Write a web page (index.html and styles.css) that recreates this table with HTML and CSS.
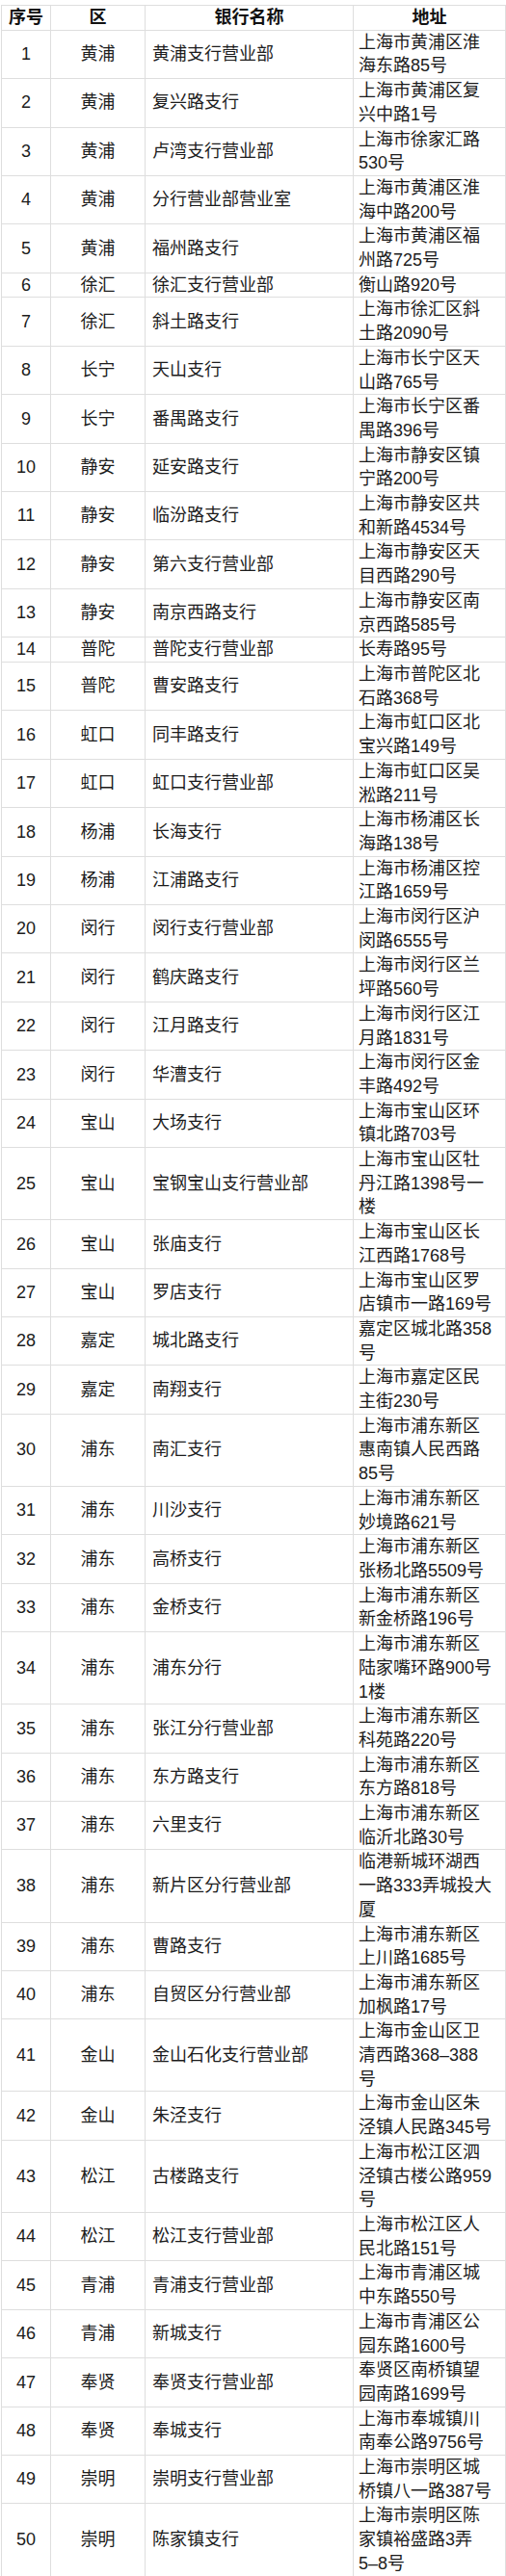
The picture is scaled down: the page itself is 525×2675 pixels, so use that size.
FILE: index.html
```html
<!DOCTYPE html>
<html lang="zh-CN">
<head>
<meta charset="utf-8">
<title>网点列表</title>
<link rel="stylesheet" href="styles.css">
</head>
<body>
<div class="sheet">
<table class="branches">
<colgroup>
<col class="c-num"><col class="c-dist"><col class="c-name"><col class="c-addr">
</colgroup>
<thead>
<tr><th>序号</th><th>区</th><th>银行名称</th><th>地址</th></tr>
</thead>
<tbody>
<tr><td class="num">1</td><td class="dist">黄浦</td><td class="name">黄浦支行营业部</td><td class="addr">上海市黄浦区淮海东路85号</td></tr>
<tr><td class="num">2</td><td class="dist">黄浦</td><td class="name">复兴路支行</td><td class="addr">上海市黄浦区复兴中路1号</td></tr>
<tr><td class="num">3</td><td class="dist">黄浦</td><td class="name">卢湾支行营业部</td><td class="addr">上海市徐家汇路530号</td></tr>
<tr><td class="num">4</td><td class="dist">黄浦</td><td class="name">分行营业部营业室</td><td class="addr">上海市黄浦区淮海中路200号</td></tr>
<tr><td class="num">5</td><td class="dist">黄浦</td><td class="name">福州路支行</td><td class="addr">上海市黄浦区福州路725号</td></tr>
<tr><td class="num">6</td><td class="dist">徐汇</td><td class="name">徐汇支行营业部</td><td class="addr">衡山路920号</td></tr>
<tr><td class="num">7</td><td class="dist">徐汇</td><td class="name">斜土路支行</td><td class="addr">上海市徐汇区斜土路2090号</td></tr>
<tr><td class="num">8</td><td class="dist">长宁</td><td class="name">天山支行</td><td class="addr">上海市长宁区天山路765号</td></tr>
<tr><td class="num">9</td><td class="dist">长宁</td><td class="name">番禺路支行</td><td class="addr">上海市长宁区番禺路396号</td></tr>
<tr><td class="num">10</td><td class="dist">静安</td><td class="name">延安路支行</td><td class="addr">上海市静安区镇宁路200号</td></tr>
<tr><td class="num">11</td><td class="dist">静安</td><td class="name">临汾路支行</td><td class="addr">上海市静安区共和新路4534号</td></tr>
<tr><td class="num">12</td><td class="dist">静安</td><td class="name">第六支行营业部</td><td class="addr">上海市静安区天目西路290号</td></tr>
<tr><td class="num">13</td><td class="dist">静安</td><td class="name">南京西路支行</td><td class="addr">上海市静安区南京西路585号</td></tr>
<tr><td class="num">14</td><td class="dist">普陀</td><td class="name">普陀支行营业部</td><td class="addr">长寿路95号</td></tr>
<tr><td class="num">15</td><td class="dist">普陀</td><td class="name">曹安路支行</td><td class="addr">上海市普陀区北石路368号</td></tr>
<tr><td class="num">16</td><td class="dist">虹口</td><td class="name">同丰路支行</td><td class="addr">上海市虹口区北宝兴路149号</td></tr>
<tr><td class="num">17</td><td class="dist">虹口</td><td class="name">虹口支行营业部</td><td class="addr">上海市虹口区吴淞路211号</td></tr>
<tr><td class="num">18</td><td class="dist">杨浦</td><td class="name">长海支行</td><td class="addr">上海市杨浦区长海路138号</td></tr>
<tr><td class="num">19</td><td class="dist">杨浦</td><td class="name">江浦路支行</td><td class="addr">上海市杨浦区控江路1659号</td></tr>
<tr><td class="num">20</td><td class="dist">闵行</td><td class="name">闵行支行营业部</td><td class="addr">上海市闵行区沪闵路6555号</td></tr>
<tr><td class="num">21</td><td class="dist">闵行</td><td class="name">鹤庆路支行</td><td class="addr">上海市闵行区兰坪路560号</td></tr>
<tr><td class="num">22</td><td class="dist">闵行</td><td class="name">江月路支行</td><td class="addr">上海市闵行区江月路1831号</td></tr>
<tr><td class="num">23</td><td class="dist">闵行</td><td class="name">华漕支行</td><td class="addr">上海市闵行区金丰路492号</td></tr>
<tr><td class="num">24</td><td class="dist">宝山</td><td class="name">大场支行</td><td class="addr">上海市宝山区环镇北路703号</td></tr>
<tr><td class="num">25</td><td class="dist">宝山</td><td class="name">宝钢宝山支行营业部</td><td class="addr">上海市宝山区牡丹江路1398号一楼</td></tr>
<tr><td class="num">26</td><td class="dist">宝山</td><td class="name">张庙支行</td><td class="addr">上海市宝山区长江西路1768号</td></tr>
<tr><td class="num">27</td><td class="dist">宝山</td><td class="name">罗店支行</td><td class="addr">上海市宝山区罗店镇市一路169号</td></tr>
<tr><td class="num">28</td><td class="dist">嘉定</td><td class="name">城北路支行</td><td class="addr">嘉定区城北路358号</td></tr>
<tr><td class="num">29</td><td class="dist">嘉定</td><td class="name">南翔支行</td><td class="addr">上海市嘉定区民主街230号</td></tr>
<tr><td class="num">30</td><td class="dist">浦东</td><td class="name">南汇支行</td><td class="addr">上海市浦东新区惠南镇人民西路85号</td></tr>
<tr><td class="num">31</td><td class="dist">浦东</td><td class="name">川沙支行</td><td class="addr">上海市浦东新区妙境路621号</td></tr>
<tr><td class="num">32</td><td class="dist">浦东</td><td class="name">高桥支行</td><td class="addr">上海市浦东新区张杨北路5509号</td></tr>
<tr><td class="num">33</td><td class="dist">浦东</td><td class="name">金桥支行</td><td class="addr">上海市浦东新区新金桥路196号</td></tr>
<tr><td class="num">34</td><td class="dist">浦东</td><td class="name">浦东分行</td><td class="addr">上海市浦东新区陆家嘴环路900号1楼</td></tr>
<tr><td class="num">35</td><td class="dist">浦东</td><td class="name">张江分行营业部</td><td class="addr">上海市浦东新区科苑路220号</td></tr>
<tr><td class="num">36</td><td class="dist">浦东</td><td class="name">东方路支行</td><td class="addr">上海市浦东新区东方路818号</td></tr>
<tr><td class="num">37</td><td class="dist">浦东</td><td class="name">六里支行</td><td class="addr">上海市浦东新区临沂北路30号</td></tr>
<tr><td class="num">38</td><td class="dist">浦东</td><td class="name">新片区分行营业部</td><td class="addr">临港新城环湖西一路333弄城投大厦</td></tr>
<tr><td class="num">39</td><td class="dist">浦东</td><td class="name">曹路支行</td><td class="addr">上海市浦东新区上川路1685号</td></tr>
<tr><td class="num">40</td><td class="dist">浦东</td><td class="name">自贸区分行营业部</td><td class="addr">上海市浦东新区加枫路17号</td></tr>
<tr><td class="num">41</td><td class="dist">金山</td><td class="name">金山石化支行营业部</td><td class="addr">上海市金山区卫清西路<span class="range">368–388</span>号</td></tr>
<tr><td class="num">42</td><td class="dist">金山</td><td class="name">朱泾支行</td><td class="addr">上海市金山区朱泾镇人民路345号</td></tr>
<tr><td class="num">43</td><td class="dist">松江</td><td class="name">古楼路支行</td><td class="addr">上海市松江区泗泾镇古楼公路959号</td></tr>
<tr><td class="num">44</td><td class="dist">松江</td><td class="name">松江支行营业部</td><td class="addr">上海市松江区人民北路151号</td></tr>
<tr><td class="num">45</td><td class="dist">青浦</td><td class="name">青浦支行营业部</td><td class="addr">上海市青浦区城中东路550号</td></tr>
<tr><td class="num">46</td><td class="dist">青浦</td><td class="name">新城支行</td><td class="addr">上海市青浦区公园东路1600号</td></tr>
<tr><td class="num">47</td><td class="dist">奉贤</td><td class="name">奉贤支行营业部</td><td class="addr">奉贤区南桥镇望园南路1699号</td></tr>
<tr><td class="num">48</td><td class="dist">奉贤</td><td class="name">奉城支行</td><td class="addr">上海市奉城镇川南奉公路9756号</td></tr>
<tr><td class="num">49</td><td class="dist">崇明</td><td class="name">崇明支行营业部</td><td class="addr">上海市崇明区城桥镇八一路387号</td></tr>
<tr><td class="num">50</td><td class="dist">崇明</td><td class="name">陈家镇支行</td><td class="addr">上海市崇明区陈家镇裕盛路3弄<span class="range">5–8</span>号</td></tr>
</tbody>
</table>
</div>
</body>
</html>
```

FILE: styles.css
```css
html, body {
  margin: 0;
  padding: 0;
  background: #ffffff;
}

body {
  font-family: "Liberation Sans", "Noto Sans CJK SC", sans-serif;
  font-size: 18px;
  color: #1c1c1c;
}

.sheet {
  padding: 5px 0 0 1px;
}

.branches {
  border-collapse: collapse;
  table-layout: fixed;
  width: 523px;
}

.c-num { width: 51px; }
.c-dist { width: 98px; }
.c-name { width: 216px; }
.c-addr { width: 158px; }

.branches th,
.branches td {
  border: 1px solid #dedede;
  padding: 0;
  line-height: 24.7px;
  vertical-align: middle;
  word-break: normal;
}

.branches th {
  font-weight: bold;
  text-align: center;
  color: #111111;
}

.num,
.dist {
  text-align: center;
}

.name {
  text-align: left;
  padding-left: 7px !important;
}

.addr {
  text-align: left;
  padding: 0 11px 0 5px !important;
}

.range {
  white-space: nowrap;
}
```
